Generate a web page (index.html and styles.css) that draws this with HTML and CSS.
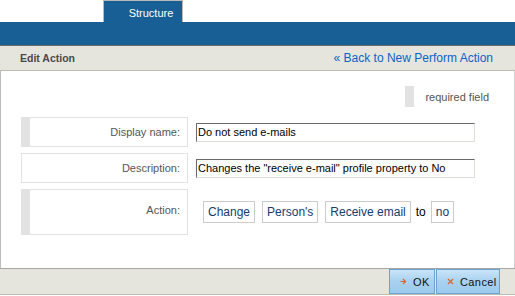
FILE: index.html
```html
<!DOCTYPE html>
<html lang="en">

<head>
    <meta charset="UTF-8">
    <title>Edit Action</title>
    <link rel="stylesheet" href="styles.css">
</head>

<body>
    <div class="tabs">
        <div class="tab">Structure</div>
    </div>
    <div class="topbar"></div>

    <div class="header">
        <span class="title">Edit Action</span>
        <a class="back-link" href="#">&laquo; Back to New Perform Action</a>
    </div>

    <div class="content">
        <div class="legend">
            <span class="req-mark"></span>
            <span>required field</span>
        </div>

        <div class="row">
            <div class="label required">Display name:</div>
            <div class="field">
                <input class="text-input" type="text" value="Do not send e-mails">
            </div>
        </div>

        <div class="row">
            <div class="label">Description:</div>
            <div class="field">
                <input class="text-input" type="text" value="Changes the &quot;receive e-mail&quot; profile property to No">
            </div>
        </div>

        <div class="row row-tall">
            <div class="label required">Action:</div>
            <div class="field action-parts">
                <span class="chip">Change</span>
                <span class="chip">Person's</span>
                <span class="chip">Receive email</span>
                <span class="plain">to</span>
                <span class="chip">no</span>
            </div>
        </div>
    </div>

    <div class="footer">
        <button class="btn btn-ok">
            <svg class="btn-icon" width="7" height="7" viewBox="0 0 7 7"><path d="M0.5 3.5h5M3 1l2.5 2.5L3 6" fill="none" stroke="#e0632a" stroke-width="1.2"/></svg>
            OK
        </button>
        <button class="btn btn-cancel">
            <svg class="btn-icon" width="7" height="7" viewBox="0 0 7 7"><path d="M1 1l5 5M6 1l-5 5" fill="none" stroke="#e0632a" stroke-width="1.2"/></svg>
            Cancel
        </button>
    </div>
</body>

</html>
```

FILE: styles.css
```css
body {
    margin: 0;
    padding: 0;
    font-family: "Liberation Sans", Arial, sans-serif;
    font-size: 11px;
    background-color: #ffffff;
    width: 515px;
    height: 296px;
    overflow: hidden;
}

.tabs {
    height: 22px;
    padding-left: 103px;
    display: flex;
    align-items: flex-end;
}

.tab {
    width: 80px;
    height: 22px;
    box-sizing: border-box;
    background-color: #175f94;
    border: 1px solid #b9b9b9;
    border-bottom: none;
    color: #ffffff;
    font-size: 11px;
    text-align: center;
    line-height: 24px;
    padding-left: 16px;
}

.topbar {
    height: 23px;
    background-color: #175f94;
    border-bottom: 1px solid #6b6b6b;
}

.header {
    height: 24px;
    background-color: #e6e5dd;
    border-bottom: 1px solid #bdbdb8;
    display: flex;
    justify-content: space-between;
    align-items: center;
    padding: 0 22px 0 20px;
}

.title {
    font-weight: bold;
    font-size: 10.5px;
    color: #4a4a4a;
}

.back-link {
    color: #0a63c8;
    font-size: 12px;
    text-decoration: none;
}

.content {
    height: 197px;
    box-sizing: border-box;
    border-left: 1px solid #bdbdbd;
    border-right: 1px solid #d0d0d0;
    padding: 15px 0 0 20px;
}

.legend {
    display: flex;
    align-items: center;
    justify-content: flex-end;
    gap: 11px;
    padding-right: 25px;
    height: 21px;
    color: #555555;
    font-size: 11px;
    margin-bottom: 10px;
}

.req-mark {
    width: 9px;
    height: 21px;
    background-color: #e2e2e2;
}

.row {
    display: flex;
    align-items: center;
    margin-bottom: 6px;
}

.label {
    width: 167px;
    height: 30px;
    box-sizing: border-box;
    border: 1px solid #e2e2e2;
    text-align: right;
    padding: 8px 7px 0 0;
    color: #555555;
    font-size: 11px;
}

.label.required {
    border-left: 9px solid #e2e2e2;
}

.row-tall .label {
    height: 46px;
    padding-top: 14px;
}

.field {
    margin-left: 8px;
}

.text-input {
    width: 279px;
    height: 19px;
    box-sizing: border-box;
    border: 1px solid;
    border-color: #6a6a6a #e0ded8 #e0ded8 #6a6a6a;
    padding: 0 1px;
    font-family: "Liberation Sans", Arial, sans-serif;
    font-size: 11px;
    color: #000000;
}

.action-parts {
    display: flex;
    align-items: center;
    gap: 7px;
    margin-left: 15px;
}

.chip {
    height: 22px;
    box-sizing: border-box;
    border: 1px solid #cccccc;
    padding: 0 4px;
    line-height: 20px;
    color: #143c6e;
    font-size: 12px;
}

.plain {
    font-size: 12px;
    color: #000000;
    margin: 0 -2px;
}

.footer {
    height: 27px;
    box-sizing: border-box;
    background-color: #e6e5dd;
    border-top: 1px solid #a6a6a2;
    border-bottom: 1px solid #bdbdb8;
    display: flex;
    justify-content: flex-end;
    padding-right: 15px;
}

.btn {
    height: 25px;
    padding: 0 0 0 10px;
    margin: 0 0 0 1px;
    background: linear-gradient(#c9e4f7, #a7d1f0 50%, #9ccbee);
    border: 1px solid #6ea3cd;
    color: #111111;
    font-family: "Liberation Sans", Arial, sans-serif;
    font-size: 11px;
    letter-spacing: 0.4px;
    display: flex;
    align-items: center;
    cursor: pointer;
}

.btn-ok {
    width: 46px;
}

.btn-cancel {
    width: 64px;
}

.btn-icon {
    margin-right: 6px;
}
```
